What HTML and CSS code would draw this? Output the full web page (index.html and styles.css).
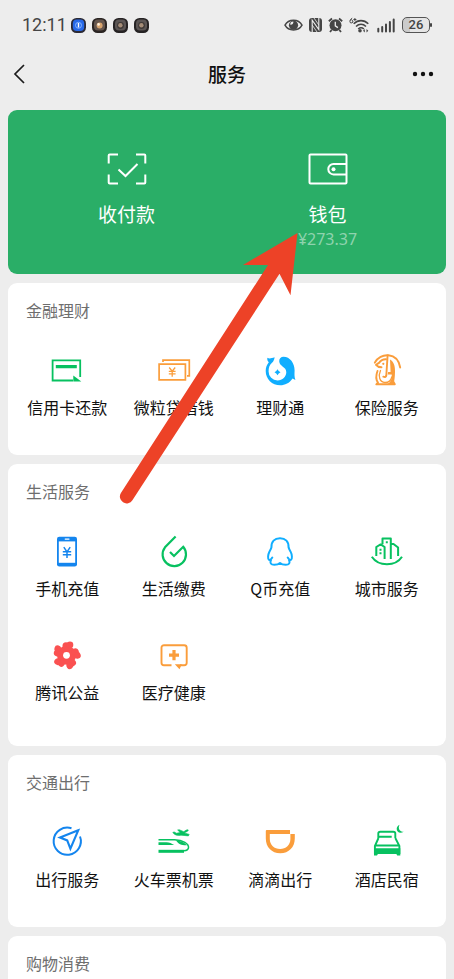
FILE: index.html
```html
<!DOCTYPE html>
<html lang="zh-CN">
<head>
<meta charset="utf-8">
<meta name="viewport" content="width=device-width, initial-scale=1">
<title>服务</title>
<link rel="stylesheet" href="styles.css">
</head>
<body>
<div class="app">
  <div class="status">
    <span class="time">12:11</span>
    <div class="notices">
      <svg class="notice" viewBox="0 0 15 15"><rect width="15" height="15" rx="5.5" fill="#2c2a35"/><rect x="1.8" y="1.5" width="11.4" height="11.4" rx="4" fill="#2869e8"/><circle cx="7.5" cy="7.3" r="3" fill="none" stroke="#86b4ff"/><path d="M7.5 5v4.5" stroke="#fff" stroke-width="1.4"/></svg>
      <svg class="notice" viewBox="0 0 15 15"><rect width="15" height="15" rx="5.5" fill="#2b2523"/><rect x="2" y="1.6" width="11" height="11" rx="4" fill="#65564e"/><circle cx="7.6" cy="7.5" r="3" fill="#d8a46e"/><circle cx="6.6" cy="6.4" r="1.3" fill="#fff0dc"/></svg>
      <svg class="notice" viewBox="0 0 15 15"><rect width="15" height="15" rx="5.5" fill="#262324"/><rect x="2" y="1.6" width="11" height="11" rx="4" fill="#5c5655"/><circle cx="7.5" cy="7.5" r="3.4" fill="#3f3937"/><circle cx="7.4" cy="7.2" r="2.2" fill="#a58d78"/></svg>
      <svg class="notice" viewBox="0 0 15 15"><rect width="15" height="15" rx="5.5" fill="#262324"/><rect x="2" y="1.6" width="11" height="11" rx="4" fill="#5c5655"/><circle cx="7.5" cy="7.5" r="3.4" fill="#3f3937"/><circle cx="7.4" cy="7.2" r="2.2" fill="#a58d78"/></svg>
    </div>
    <div class="signals">
      <svg width="19" height="16" viewBox="0 0 19 16"><path d="M1 8.2C4.5 1.600 14.500 1.600 18 8.200 14.500 14.600 4.500 14.600 1 8.200z" fill="none" stroke="#454545" stroke-width="1.500"/><circle cx="9.500" cy="8.200" r="4.600" fill="#454545"/><path d="M9.300 4.500a2.600 2.600 0 0 1-3 3.200 3 3 0 0 1 3-3.200z" fill="#ededed"/></svg>
      <svg width="13" height="16" viewBox="0 0 13 16"><rect x="0" y="1" width="13" height="14" rx="3" fill="#454545"/><path d="M3.200 15V3.200L9.800 12.600V1" fill="none" stroke="#ededed" stroke-width="1.100"/><path d="m5 1 4.800 7M3.200 8 8 15" fill="none" stroke="#ededed" stroke-width=".8"/></svg>
      <svg width="15" height="16" viewBox="0 0 15 16"><circle cx="7.500" cy="8.300" r="6" fill="#454545"/><path d="M.8 4.200 4 1.500M14.200 4.200 11 1.500M3.600 13 2 15M11.400 13l1.600 2" stroke="#454545" stroke-width="1.800"/><path d="M7.300 4.800v4l2.600 1.800" fill="none" stroke="#ededed" stroke-width="1.300"/></svg>
      <svg width="21" height="16" viewBox="0 0 21 16"><path d="M3.200 1.200C1.600 2 .9 3.200.9 4.400a1.500 1.500 0 1 0 .4-1M4.400 2.500h3M5.900 1v3" fill="none" stroke="#454545"/><path d="M4.700 6.800c4.300-4.200 10.300-4.200 14.600 0M7 9.500c3-2.800 7-2.800 10 0M9.200 12c1.700-1.500 4-1.500 5.700 0" fill="none" stroke="#454545" stroke-width="1.600"/><circle cx="11" cy="13.800" r="1.800" fill="#454545"/><path d="m14 13.800 1.800-1.800v3.600zM19.300 13.800 17.500 12v3.600z" fill="#454545"/></svg>
      <svg width="20" height="16" viewBox="0 0 20 16"><path d="M2.300 14.500v-2.700M6.200 14.500V10M10 14.500V7.500M13.900 14.500V5M17.700 14.500v-12" stroke="#454545" stroke-width="2" stroke-linecap="round"/></svg>
      <span class="battery">26</span>
    </div>
  </div>

  <header class="nav">
    <button class="nav-btn" aria-label="返回"><svg width="14" height="20" viewBox="0 0 14 20"><path d="M12 1 3 10l9 9" fill="none" stroke="#1c1c1c" stroke-width="1.700"/></svg></button>
    <h1>服务</h1>
    <button class="nav-btn" aria-label="更多"><svg width="22" height="6" viewBox="0 0 22 6" fill="#111"><circle cx="3" cy="3" r="2.200"/><circle cx="11" cy="3" r="2.200"/><circle cx="19" cy="3" r="2.200"/></svg></button>
  </header>

  <main class="cards">
    <section class="pay">
      <a class="pay-item" href="#pay">
        <svg width="40" height="32" viewBox="0 0 40 32" fill="none" stroke="#fff" stroke-width="2"><path d="M1.700 10.500V2.500q0-1 1-1H11M29 1.500h8.300q1 0 1 1v8M38.300 21.500v8q0 1-1 1H29M11 30.500H2.700q-1 0-1-1v-8"/><path d="m11.500 16.500 7 6.500 12-12"/></svg>
        <span>收付款</span>
      </a>
      <a class="pay-item" href="#wallet">
        <svg width="40" height="32" viewBox="0 0 40 32" fill="none" stroke="#fff" stroke-width="2"><rect x="1.500" y="1.500" width="37" height="29" rx="1"/><path d="M38 11H25.500a5.200 5.200 0 0 0 0 10.400H38"/><circle cx="25.500" cy="16.200" r="2" fill="#fff" stroke="none"/></svg>
        <span>钱包</span>
        <small>¥273.37</small>
      </a>
    </section>

    <section class="card">
      <h2>金融理财</h2>
      <div class="grid">
        <a class="item" href="#credit">
          <svg viewBox="0 0 36 36"><path d="M31.200 24V7.300H3.600V27.500H24" fill="none" stroke="#07c160" stroke-width="1.800"/><path d="M6.800 12h21v3.200h-21zM24.300 22.500l8 5.900h-8z" fill="#07c160"/></svg>
          <span>信用卡还款</span>
        </a>
        <a class="item" href="#loan">
          <svg viewBox="0 0 36 36" fill="none" stroke="#fa9d3b" stroke-width="1.700"><path d="M3.100 11.200h26.300v15.700H3.100zM7 9V7.200h26.300v15.700H31"/><path d="m13.200 14.500 3 3.700 3-3.700M16.200 18v5.700M12.800 18.300h6.800M12.800 20.900h6.800" stroke-width="1.300"/></svg>
          <span>微粒贷借钱</span>
        </a>
        <a class="item" href="#fund">
          <svg viewBox="0 0 36 36" fill="#10aeff"><path d="M5.400 4.800C7.500 6 9.500 5.200 12.600 4.200 12.300 6.500 11.600 8.300 10 9.800 7.500 12 6.500 15 6.600 18.500A8.900 8.900 0 0 0 15.500 27.500C20.500 27.500 24.300 23.500 24.300 19.200 24.300 13.500 17.400 13.800 17.200 8.300 17.200 5.200 19 3.700 21.500 3.700 28 3.700 32.600 10 32.600 17.500 32.500 21 32.200 23.500 33.400 27L30.600 25.500C27.500 30 23 32.300 18.300 32.300 10 32.300 3.700 26 3.700 18 3.700 14.500 4.800 11.800 6.800 9.300 5.500 8 5 6.500 5.400 4.800z"/><path d="m15.500 16.300 1.200 1.800 1.800 1.200-1.800 1.200-1.200 1.800-1.200-1.800-1.800-1.200 1.800-1.200z"/></svg>
          <span>理财通</span>
        </a>
        <a class="item" href="#insurance">
          <svg viewBox="0 0 36 36" fill="none" stroke="#fa9d3b" stroke-width="1.900" stroke-linecap="round" stroke-linejoin="round"><path d="M5.800 9.700C11-.7 28.500-1.200 31.200 14.500"/><path d="M18.600 2.500 17.300 22.500q-.3 2-3 1.200"/><path d="M17 6.200C13.500 6 11.500 7.800 10 9.900L7 11.800c1.500 1.900 3.300 2.400 5.500 2.400M8.500 18C6.800 22.500 7 27 9 29.500L7.300 31.300h18.500L24.500 29"/><path d="M21 6.500c4.300 2.500 5.200 7.500 5 12.500-.1 4.500-.5 8-1.300 12h-6c3.800-2.500 4.300-6 4-9.500h-4l.4-2.500h2.500z" fill="#fa9d3b" stroke="none"/><path d="M11.500 17.500C9 23 10.500 29.500 16 29.500c3.500 0 6-2 6.800-5.500" stroke-width="1.300"/><circle cx="14.300" cy="10.800" r="1.100" fill="#fa9d3b" stroke="none"/></svg>
          <span>保险服务</span>
        </a>
      </div>
    </section>

    <section class="card card-tall">
      <h2>生活服务</h2>
      <div class="grid">
        <a class="item" href="#phone">
          <svg viewBox="0 0 36 36"><rect x="8" y="2.700" width="20" height="29.800" rx="2.300" fill="#1485ee"/><path d="M9.800 7.400h16.400v21.400H9.800z" fill="#fff"/><path d="M16.200 5.100h3.800" stroke="#fff" stroke-width="1.200" stroke-linecap="round"/><path d="m14.800 13.200 3.200 4.800 3.200-4.800M18 18v6M13.800 17.800h8.400M13.800 20.700h8.400" fill="none" stroke="#1485ee" stroke-width="1.500"/></svg>
          <span>手机充值</span>
        </a>
        <a class="item" href="#bills">
          <svg viewBox="0 0 36 36" fill="none" stroke="#07c160" stroke-width="2.200"><path d="M19.600 2.500 9 13.300A11.700 11.700 0 1 0 27.200 12.800L18 22l-4-4"/></svg>
          <span>生活缴费</span>
        </a>
        <a class="item" href="#qcoin">
          <svg viewBox="0 0 36 36" fill="none" stroke="#10aeff" stroke-width="2" stroke-linejoin="round" stroke-linecap="round"><path d="M10.300 23.500c-1 1.800-2.200 2.700-3.300 2.400-1.500-.8-1-5.600.3-8 .8-1.500 1.700-2.700 2.100-4.400C9.200 7.500 12.500 4.200 18 4.200s8.800 3.300 8.600 9.300c.4 1.700 1.300 2.900 2.100 4.400 1.300 2.400 1.800 7.200.3 8-1.100.3-2.300-.6-3.300-2.400M9 26c-1.400 3-.2 4.800 3.300 4.800 2.500 0 4.200-.4 5.700-1.800 1.500 1.400 3.200 1.800 5.700 1.800 3.500 0 4.700-1.800 3.300-4.800"/></svg>
          <span>Q币充值</span>
        </a>
        <a class="item" href="#city">
          <svg viewBox="0 0 36 36" fill="none" stroke="#07c160" stroke-width="2" stroke-linejoin="round"><path d="M2.800 22.800C9.500 32.800 26.500 32.800 33 22.800" stroke-width="2"/><path d="M7.300 22V13l4.300-2.600 4 2.600v12M13.500 10.300V4.600h8.300V25M22 10h2.500l4.600 3.500V22"/><path d="M10.500 14.700h2v2h-2zM10.500 18.300h2v2h-2zM16.800 7.300h2v2h-2z" fill="#07c160" stroke="none"/></svg>
          <span>城市服务</span>
        </a>
        <a class="item" href="#charity">
          <svg viewBox="0 0 36 36"><g fill="#fa5151"><circle cx="17.500" cy="17.300" r="9.500"/><g id="petal"><circle cx="17" cy="7.800" r="3.500"/><circle cx="21" cy="6.900" r="3.300"/></g><use href="#petal" transform="rotate(72 17.500 17.300)"/><use href="#petal" transform="rotate(144 17.500 17.300)"/><use href="#petal" transform="rotate(216 17.500 17.300)"/><use href="#petal" transform="rotate(288 17.500 17.300)"/></g><circle cx="17.500" cy="17.300" r="3.400" fill="#fff"/></svg>
          <span>腾讯公益</span>
        </a>
        <a class="item" href="#medical">
          <svg viewBox="0 0 36 36"><path d="M15.500 27.200H8a2.500 2.500 0 0 1-2.500-2.500V9.700A2.500 2.500 0 0 1 8 7.200h20.200a2.500 2.500 0 0 1 2.500 2.500v15a2.500 2.500 0 0 1-2.500 2.500H24" fill="none" stroke="#fa9d3b" stroke-width="1.900"/><path d="M18.800 26.300h7l-2.300 5zM16.400 12h3.200v3.500H23v3.200h-3.400v3.500h-3.200v-3.500H13v-3.200h3.400z" fill="#fa9d3b"/></svg>
          <span>医疗健康</span>
        </a>
      </div>
    </section>

    <section class="card">
      <h2>交通出行</h2>
      <div class="grid">
        <a class="item" href="#travel">
          <svg viewBox="0 0 36 36" fill="none" stroke="#1485ee" stroke-width="2"><path d="M22.500 3.300A13.600 13.600 0 1 0 31 11.500"/><path d="M29.200 5.300 11 12.600l7.200 2.800 3.200 8.300z" stroke-width="2.100"/></svg>
          <span>出行服务</span>
        </a>
        <a class="item" href="#tickets">
          <svg viewBox="0 0 36 36" fill="none" stroke="#07c160"><path d="M2.500 14.700h16C27 15 33 19 32.500 22.800c-.3 2-2.200 2.700-4.500 3" stroke-width="1.500"/><path d="M2.500 26.300H28" stroke-width="3"/><path d="M2.500 17.200h8c3 .2 5 1.200 7.700 2.700H2.500zM20 15.300c5 .7 8.800 2.200 11 5-4.500.3-9-1-11-5z" fill="#07c160" stroke="none"/><path d="m16.800 7.300 1.500-.3 2.200 1.200 3.700-.7L21.600 5l1.600-.3 4.600 2 2-1.400c1-.7 2.500-.8 2.500-.1 0 1-2.800 2-3.800 2.700l4.700 1.500-.8 1.500-7.400-.7c-3.500.6-6.800 0-8.200-2.900z" fill="#07c160" stroke="#07c160" stroke-width=".6"/></svg>
          <span>火车票机票</span>
        </a>
        <a class="item" href="#didi">
          <svg viewBox="0 0 36 36"><path fill="#fa9d3b" fill-rule="evenodd" d="M3.800 5.900q0-.9.900-.9H28v4h4.800v4.500c0 8.500-5.800 14.800-14.500 14.800S3.800 22 3.800 13.500zM7.800 9v5c0 6 4.500 10 10.300 10s10.300-4 10.300-10V9z"/></svg>
          <span>滴滴出行</span>
        </a>
        <a class="item" href="#hotel">
          <svg viewBox="0 0 36 36" fill="none" stroke="#07c160" stroke-width="1.900"><path d="M9.300 13V8.500q0-1.800 2-1.800h13q2 0 2 1.800V13M9.500 13 5.900 21v8M26.300 13l4.100 8v8M10 11.800h12.700M6 20.500h24.500"/><path d="M5 23.200h26.300v7.200h-3.100l-.8-1.400H8.900L8 30.400H5z" fill="#07c160" stroke="none"/><path d="M30.500-.3c-1.800 3.800.1 6.900 4.200 7.100-3.800 2.200-7.200.2-7-3C27.800 1.900 28.800.6 30.500-.3z" fill="#07c160" stroke="none"/></svg>
          <span>酒店民宿</span>
        </a>
      </div>
    </section>

    <section class="card card-last">
      <h2>购物消费</h2>
    </section>
  </main>

  <svg class="arrow" width="180" height="272" viewBox="0 0 180 272" aria-hidden="true"><path d="M177.500 1 123 33h25L.9 261a6.700 6.700 0 0 0 11.500 7.200L159.500 41.700l11 21.600z" fill="#ed4227"/></svg>
</div>
</body>
</html>
```
FILE: styles.css
```css
* {
  box-sizing: border-box;
}

body {
  margin: 0;
  background: #ededed;
  color: #111;
  font-family: "Noto Sans CJK SC", sans-serif;
}

a {
  color: inherit;
  text-decoration: none;
}

svg {
  display: block;
  flex-shrink: 0;
  overflow: visible;
}

.app {
  position: relative;
  display: flex;
  flex-direction: column;
  min-height: 100vh;
}

.status {
  display: flex;
  align-items: center;
  height: 50px;
  padding: 0 24px 0 22px;
  color: #454545;
}

.time {
  font: 18px/24px Roboto, sans-serif;
}

.notices {
  display: flex;
  gap: 6px;
  margin-left: 4px;
}

.notice {
  width: 15px;
  height: 15px;
}

.signals {
  display: flex;
  align-items: center;
  gap: 6px;
  margin-left: auto;
}

.battery {
  position: relative;
  width: 28px;
  height: 16px;
  border: 1px solid #555;
  border-radius: 5px;
  background: linear-gradient(90deg, #cbcbcb 26%, #e6e6e6 26%);
  font: 500 13px/14px Roboto, sans-serif;
  text-align: center;
}

.battery::after {
  content: "";
  position: absolute;
  top: 5px;
  right: -3px;
  width: 2px;
  height: 4px;
  border-radius: 1px;
  background: #454545;
}

.nav {
  display: flex;
  align-items: center;
  justify-content: space-between;
  height: 48px;
  margin-bottom: 12px;
  padding: 0 12px;
}

.nav h1 {
  margin: 0;
  font-size: 19px;
  font-weight: 500;
  line-height: 28px;
}

.nav-btn {
  display: flex;
  align-items: center;
  width: 30px;
  height: 40px;
  padding: 0;
  border: 0;
  background: none;
}

.cards {
  display: flex;
  flex: 1;
  flex-direction: column;
  gap: 9px;
  padding: 0 8px;
}

.pay {
  display: flex;
  height: 164px;
  padding: 43px 18px 0;
  border-radius: 9px;
  background: #2aae67;
  color: #fff;
}

.pay-item {
  display: flex;
  flex: 1;
  flex-direction: column;
  align-items: center;
  font-size: 19px;
  line-height: 28px;
}

.pay-item span {
  margin-top: 15px;
}

.pay-item small {
  color: #8fd3ae;
  font: 16px/22px "Noto Sans", sans-serif;
}

.card {
  padding: 15px 6px 36px;
  border-radius: 9px;
  background: #fff;
}

.card-tall {
  padding-bottom: 42px;
}

.card-last {
  flex: 1;
  padding-bottom: 0;
  border-radius: 9px 9px 0 0;
}

.card h2 {
  margin: 0;
  padding-left: 12px;
  color: #6e6e6e;
  font-size: 16px;
  font-weight: 400;
  line-height: 24px;
}

.grid {
  display: grid;
  grid-template-columns: repeat(4, 1fr);
  row-gap: 38px;
  margin-top: 31px;
}

.item {
  display: flex;
  flex-direction: column;
  align-items: center;
  gap: 6px;
  font-size: 16px;
  line-height: 24px;
  white-space: nowrap;
}

.item svg {
  width: 36px;
  height: 36px;
}

.arrow {
  position: absolute;
  top: 232px;
  left: 120px;
  pointer-events: none;
}
```
